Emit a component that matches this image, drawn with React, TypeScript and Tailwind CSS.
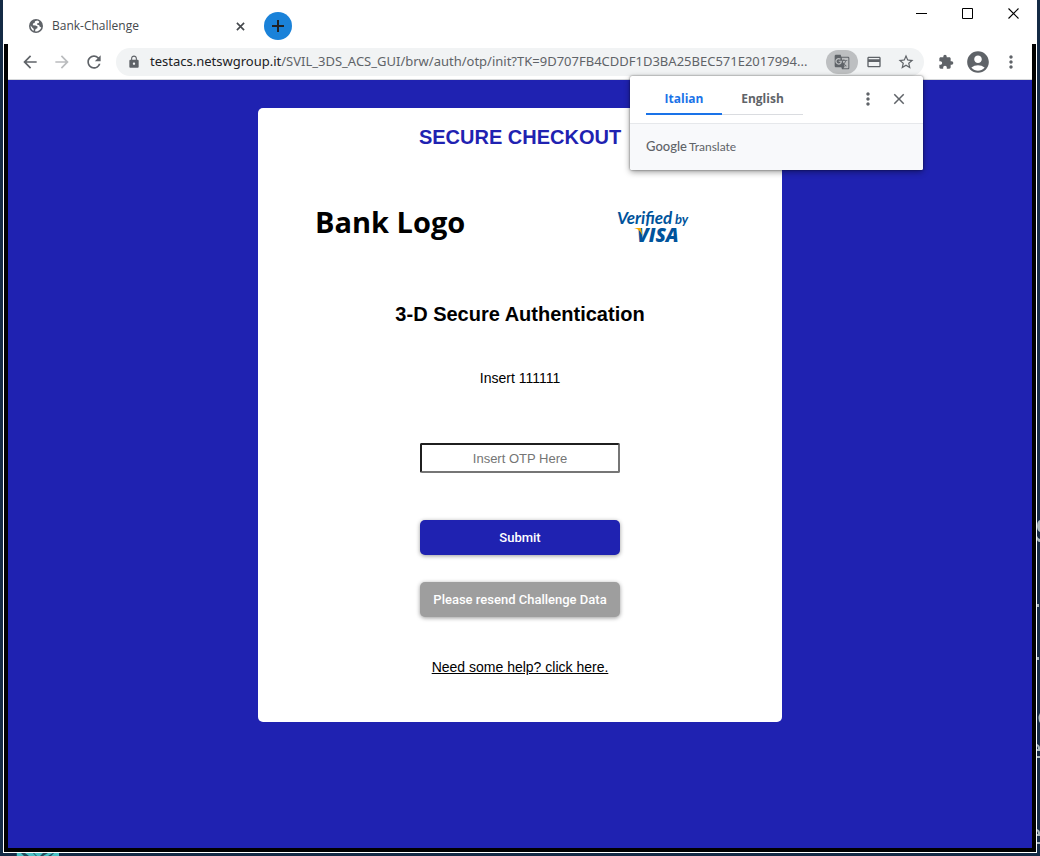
import React from "react";
import {
  MdAccountCircle,
  MdArrowBack,
  MdArrowForward,
  MdClose,
  MdExtension,
  MdGTranslate,
  MdLock,
  MdMoreVert,
  MdPayment,
  MdRefresh,
  MdStarBorder,
} from "react-icons/md";

function Globe() {
  return (
    <svg className="size-[14px]" viewBox="0 0 14 14" aria-hidden="true">
      <circle cx="7" cy="7" r="7" fill="#5f6368" />
      <path
        d="M8.300 1.600L6 2.300 5.600 4 4 4.600 3.800 6.200 6.600 6.400 8.600 7.600 8.300 9.200 6.600 10 6 12.300C8.800 12.800 11.600 11 12.300 8.400L10.600 7.600 10.200 6.200 8 5.600 8 4.400 9.800 3.900 10.200 2.500ZM1.600 6.600C1.500 9 2.700 11 4.500 11.900L4.800 9.900 3.400 8.700Z"
        fill="#fff"
      />
    </svg>
  );
}

function TitleBar() {
  return (
    <header className="flex h-11 items-start justify-between">
      <div className="flex h-11 items-center pt-2 pl-[25px]">
        <div className="flex w-[216px] items-center" role="tab" aria-selected="true">
          <Globe />
          <span className="ml-[9px] flex-1 font-['Open_Sans',sans-serif] text-xs text-[#45494d]">Bank-Challenge</span>
          <button aria-label="Close tab" className="text-[#45494d]">
            <svg className="size-[9px]" viewBox="0 0 10 10" stroke="currentColor" strokeWidth="1.8">
              <path d="M1 1l8 8M9 1l-8 8" />
            </svg>
          </button>
        </div>
        <button aria-label="New tab" className="ml-[19px] flex size-7 items-center justify-center rounded-full bg-[#1a82d9] text-[#202124]">
          <svg className="size-3" viewBox="0 0 12 12" stroke="currentColor" strokeWidth="2">
            <path d="M6 0v12M0 6h12" />
          </svg>
        </button>
      </div>
      <div className="flex gap-[35px] pt-2 pr-[17px] text-black">
        <button aria-label="Minimize">
          <svg className="size-[11px]" viewBox="0 0 11 11" stroke="currentColor">
            <path d="M0 5.500h11" />
          </svg>
        </button>
        <button aria-label="Maximize">
          <svg className="size-[11px]" viewBox="0 0 11 11" fill="none" stroke="currentColor">
            <path d="M.5 .5h10v10H.5z" />
          </svg>
        </button>
        <button aria-label="Close window">
          <svg className="size-[11px]" viewBox="0 0 11 11" stroke="currentColor" strokeWidth="1.1">
            <path d="M.5 .5l10 10M10.500 .5l-10 10" />
          </svg>
        </button>
      </div>
    </header>
  );
}

function TranslatePopup() {
  return (
    <div
      role="dialog"
      aria-label="Translate"
      className="absolute top-7 right-px z-10 w-[293px] rounded-xs bg-white font-['Open_Sans',sans-serif] shadow-[0_0_2px_rgba(0,0,0,0.55),0_2px_6px_rgba(0,0,0,0.4)]"
    >
      <div className="flex h-12 items-start border-b border-[#e6e8eb] px-4 text-xs font-bold">
        <div className="mt-3 flex h-[27px] text-[#5f6368]" role="tablist">
          <button role="tab" aria-selected="true" className="w-[76px] border-b-2 border-[#1a73e8] pb-[2px] text-[#1a73e8]">
            Italian
          </button>
          <button role="tab" aria-selected="false" className="w-[81px] border-b border-[#dadce0] pb-[3px]">
            English
          </button>
        </div>
        <div className="mt-[13px] ml-auto flex items-center gap-3 text-[#5f6368]">
          <button aria-label="Options">
            <MdMoreVert className="size-5" />
          </button>
          <button aria-label="Close" className="-mr-px">
            <MdClose className="size-[18px]" />
          </button>
        </div>
      </div>
      <p className="flex h-[46px] items-center rounded-b-xs bg-[#f8f9fb] pl-4 font-[Lato,sans-serif] text-[#5f6368]">
        <span className="mr-[2px] text-[13px] font-medium">Google</span>
        <span className="text-xs">Translate</span>
      </p>
    </div>
  );
}

function Toolbar() {
  return (
    <nav className="flex h-9 items-center border-b border-[#d5d7da] bg-white pl-3 text-[#5f6368]">
      <button aria-label="Back">
        <MdArrowBack className="size-5" />
      </button>
      <button aria-label="Forward" className="ml-3 text-[#babcbe]">
        <MdArrowForward className="size-5" />
      </button>
      <button aria-label="Reload" className="ml-3">
        <MdRefresh className="size-5" />
      </button>
      <div className="relative ml-3 flex h-7 min-w-0 flex-1 items-center rounded-full bg-[#f1f3f4] pr-[9px] pl-[11px]">
        <MdLock className="size-[14px] shrink-0" />
        <p className="ml-[9px] min-w-0 flex-1 font-['Noto_Sans',sans-serif] text-[13px] whitespace-nowrap">
          <span className="text-[#202124]">testacs.netswgroup.it</span>
          /SVIL_3DS_ACS_GUI/brw/auth/otp/init?TK=9D707FB4CDDF1D3BA25BEC571E2017994...
        </p>
        <button aria-label="Translate this page" className="flex h-6 w-8 shrink-0 items-center justify-center rounded-full bg-[#bdbfc1]">
          <MdGTranslate className="size-4" />
        </button>
        <button aria-label="Saved cards" className="ml-2">
          <MdPayment className="size-4" />
        </button>
        <button aria-label="Bookmark" className="ml-[15px]">
          <MdStarBorder className="size-[18px]" />
        </button>
        <TranslatePopup />
      </div>
      <button aria-label="Extensions" className="ml-[14px]">
        <MdExtension className="size-4" />
      </button>
      <button aria-label="Profile" className="ml-[11px]">
        <MdAccountCircle className="size-[26px]" />
      </button>
      <button aria-label="Menu" className="mr-[11px] ml-[10px]">
        <MdMoreVert className="size-5" />
      </button>
    </nav>
  );
}

function VerifiedByVisa() {
  return (
    <svg
      className="h-[52px] w-[74px]"
      viewBox="0 -4 74 52"
      role="img"
      aria-label="Verified by Visa"
      fill="#00539b"
      fontStyle="italic"
    >
      <text x="0" y="25" fontSize="17" fontWeight="700" fontFamily="Lato, sans-serif">Verified</text>
      <text x="58" y="25" fontSize="13" fontWeight="700" fontFamily="Lato, sans-serif">by</text>
      <text x="20" y="43" fontSize="19" fontWeight="800" fontFamily="'Open Sans', sans-serif">VISA</text>
      <path d="M17 29h7l1.500 8c-1.500-4.500-4-7-8.500-8z" fill="#f7a800" />
    </svg>
  );
}

function ChallengeCard() {
  return (
    <main className="flex w-[524px] max-w-full flex-col items-center rounded-[5px] bg-white pb-[45px] text-center text-sm text-black">
      <h1 className="mt-[17px] text-xl leading-6 font-bold text-[#1f22b1]">SECURE CHECKOUT</h1>
      <div className="mt-[46px] flex w-full items-center justify-between pr-[91px] pl-[57px]">
        <span className="pt-[2px] font-['Open_Sans',sans-serif] text-[29px] leading-[44px] font-bold">Bank Logo</span>
        <VerifiedByVisa />
      </div>
      <h2 className="mt-[55px] text-xl leading-6 font-bold">3-D Secure Authentication</h2>
      <p className="mt-[42px] leading-5">Insert 111111</p>
      <form className="mt-[55px] flex w-[200px] flex-col" onSubmit={(e) => e.preventDefault()}>
        <input
          aria-label="One-time password"
          placeholder="Insert OTP Here"
          className="h-[30px] rounded-xs border-2 border-t-[#1f1f1f] border-r-[#767676] border-b-[#767676] border-l-[#1f1f1f] bg-white text-center text-[13px] placeholder:text-[#757575]"
        />
        <button
          type="submit"
          className="mt-[47px] h-[35px] rounded-[5px] bg-[#1f22b1] pt-px font-[Roboto,sans-serif] text-[13px] font-medium text-white shadow-[0_1px_4px_rgba(0,0,0,0.4)]"
        >
          Submit
        </button>
        <button
          type="button"
          className="mt-[27px] h-[35px] rounded-[5px] bg-[#9e9e9e] pt-px font-[Roboto,sans-serif] text-[13px] font-medium whitespace-nowrap text-white shadow-[0_1px_4px_rgba(0,0,0,0.4)]"
        >
          Please resend Challenge Data
        </button>
      </form>
      <a href="#help" className="mt-10 leading-5 underline">
        Need some help? click here.
      </a>
    </main>
  );
}

function Desktop() {
  return (
    <>
      <svg className="absolute right-0 bottom-0 h-[376px] w-[3px]" viewBox="0 0 3 376" fill="#a9b8bd">
        <path d="M3 40Q0 41 0 46T3 52zM0 56q1 3 3 3v3q-3 0-3-3zM0 124h2v3H0zM0 177h2v3H0zM3 233q-3 5 0 10zM0 264q3 1 3 4v3H0v-2h1q0-2-1-3zM0 276h3v2H0zM0 349q3 1 3 4v3H0v-2h1q0-2-1-3zM0 362h3v2H0z" />
      </svg>
      <svg className="absolute bottom-0 left-4 h-[3px] w-12" viewBox="0 0 48 3">
        <path d="M0 0h43v3H0z" fill="#204b5b" />
        <path d="M1 0h4l3 3H1zM9 0l4 3h8l-3-3zM17 0h10l-3 3h-4zM32 0h5l-5 3h-5zM38 0h5v3h-8z" fill="#49c1c5" />
      </svg>
    </>
  );
}

export default function App() {
  return (
    <div className="relative flex min-h-screen flex-col bg-[#142a45] px-[3px] pb-[3px] font-['Liberation_Sans',Arial,sans-serif]">
      <Desktop />
      <div className="relative flex flex-1 flex-col bg-white px-px pb-px">
        <TitleBar />
        <div className="flex flex-1 flex-col border-x-4 border-b-4 border-black">
          <Toolbar />
          <div className="flex flex-1 flex-col items-center bg-[#1f22b1] py-7">
            <ChallengeCard />
          </div>
        </div>
      </div>
    </div>
  );
}
